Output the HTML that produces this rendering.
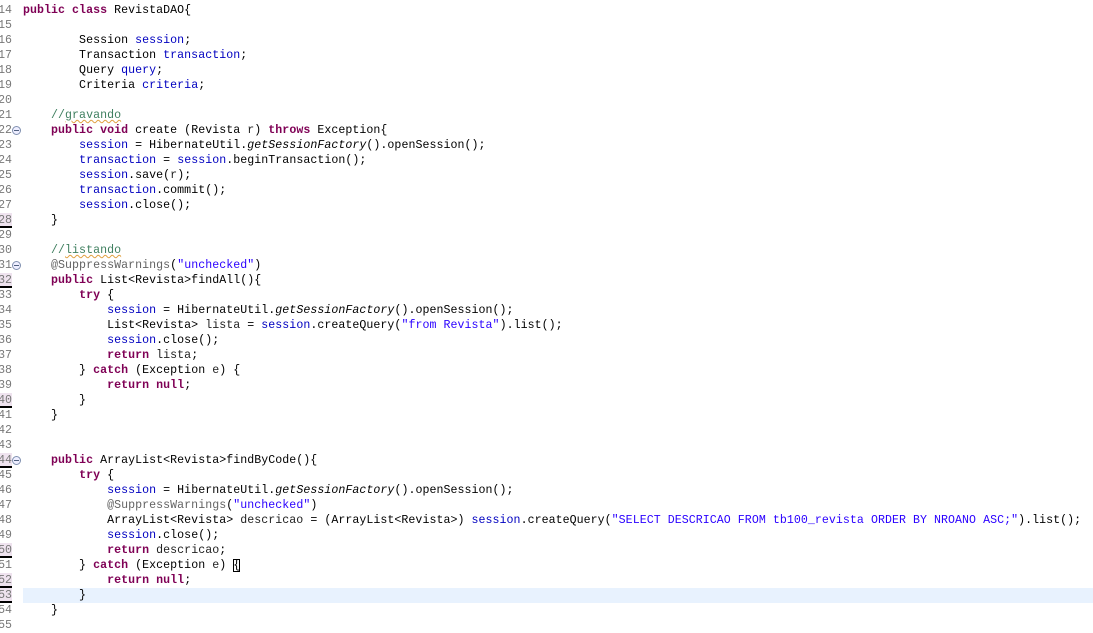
<!DOCTYPE html>
<html><head><meta charset="utf-8"><style>
body{margin:0;width:1093px;height:625px;overflow:hidden;background:#fff;font-family:"Liberation Mono","DejaVu Sans Mono",monospace;font-size:11.6px;letter-spacing:0.05px;}
.l{position:absolute;left:0;height:15px;line-height:15px;width:1093px;white-space:pre;margin-top:1px}
.n{position:absolute;left:-4px;width:16px;text-align:right;color:#787878;letter-spacing:0}
.m{background:#efe3ef;border-bottom:2px solid #000;height:13px;}
.c{position:absolute;left:23px;color:#000;}
.hl{background:#e8f2fe;}
.k{color:#7f0055;font-weight:bold}.f{color:#0000c0}.s{color:#2a00ff}.cm{color:#3f7f5f}.a{color:#646464}.i{font-style:italic}
.v{color:#222}
.u{text-decoration:underline wavy #e0a040;text-decoration-thickness:1px}
.fold{position:absolute;left:12px;top:3px;width:7px;height:7px;border:1px solid #8090b0;border-radius:50%;background:#eef;}
.fold:after{content:"";position:absolute;left:1px;top:3px;width:5px;height:1px;background:#506080}
</style></head><body>
<div class="l" style="top:2px"><span class="n">14</span><span class="c"><span class="k">public class</span> RevistaDAO{</span></div>
<div class="l" style="top:17px"><span class="n">15</span></div>
<div class="l" style="top:32px"><span class="n">16</span><span class="c">        Session <span class="f">session</span>;</span></div>
<div class="l" style="top:47px"><span class="n">17</span><span class="c">        Transaction <span class="f">transaction</span>;</span></div>
<div class="l" style="top:62px"><span class="n">18</span><span class="c">        Query <span class="f">query</span>;</span></div>
<div class="l" style="top:77px"><span class="n">19</span><span class="c">        Criteria <span class="f">criteria</span>;</span></div>
<div class="l" style="top:92px"><span class="n">20</span></div>
<div class="l" style="top:107px"><span class="n">21</span><span class="c">    <span class="cm">//<span class="u">gravando</span></span></span></div>
<div class="l" style="top:122px"><span class="n">22</span><span class="fold"></span><span class="c">    <span class="k">public void</span> create (Revista <span class="v">r</span>) <span class="k">throws</span> Exception{</span></div>
<div class="l" style="top:137px"><span class="n">23</span><span class="c">        <span class="f">session</span> = HibernateUtil.<span class="i">getSessionFactory</span>().openSession();</span></div>
<div class="l" style="top:152px"><span class="n">24</span><span class="c">        <span class="f">transaction</span> = <span class="f">session</span>.beginTransaction();</span></div>
<div class="l" style="top:167px"><span class="n">25</span><span class="c">        <span class="f">session</span>.save(<span class="v">r</span>);</span></div>
<div class="l" style="top:182px"><span class="n">26</span><span class="c">        <span class="f">transaction</span>.commit();</span></div>
<div class="l" style="top:197px"><span class="n">27</span><span class="c">        <span class="f">session</span>.close();</span></div>
<div class="l" style="top:212px"><span class="n m">28</span><span class="c">    }</span></div>
<div class="l" style="top:227px"><span class="n">29</span></div>
<div class="l" style="top:242px"><span class="n">30</span><span class="c">    <span class="cm">//<span class="u">listando</span></span></span></div>
<div class="l" style="top:257px"><span class="n">31</span><span class="fold"></span><span class="c">    <span class="a">@SuppressWarnings</span>(<span class="s">"unchecked"</span>)</span></div>
<div class="l" style="top:272px"><span class="n m">32</span><span class="c">    <span class="k">public</span> List&lt;Revista&gt;findAll(){</span></div>
<div class="l" style="top:287px"><span class="n">33</span><span class="c">        <span class="k">try</span> {</span></div>
<div class="l" style="top:302px"><span class="n">34</span><span class="c">            <span class="f">session</span> = HibernateUtil.<span class="i">getSessionFactory</span>().openSession();</span></div>
<div class="l" style="top:317px"><span class="n">35</span><span class="c">            List&lt;Revista&gt; <span class="v">lista</span> = <span class="f">session</span>.createQuery(<span class="s">"from Revista"</span>).list();</span></div>
<div class="l" style="top:332px"><span class="n">36</span><span class="c">            <span class="f">session</span>.close();</span></div>
<div class="l" style="top:347px"><span class="n">37</span><span class="c">            <span class="k">return</span> <span class="v">lista</span>;</span></div>
<div class="l" style="top:362px"><span class="n">38</span><span class="c">        } <span class="k">catch</span> (Exception <span class="v">e</span>) {</span></div>
<div class="l" style="top:377px"><span class="n">39</span><span class="c">            <span class="k">return null</span>;</span></div>
<div class="l" style="top:392px"><span class="n m">40</span><span class="c">        }</span></div>
<div class="l" style="top:407px"><span class="n">41</span><span class="c">    }</span></div>
<div class="l" style="top:422px"><span class="n">42</span></div>
<div class="l" style="top:437px"><span class="n">43</span></div>
<div class="l" style="top:452px"><span class="n m">44</span><span class="fold"></span><span class="c">    <span class="k">public</span> ArrayList&lt;Revista&gt;findByCode(){</span></div>
<div class="l" style="top:467px"><span class="n">45</span><span class="c">        <span class="k">try</span> {</span></div>
<div class="l" style="top:482px"><span class="n">46</span><span class="c">            <span class="f">session</span> = HibernateUtil.<span class="i">getSessionFactory</span>().openSession();</span></div>
<div class="l" style="top:497px"><span class="n">47</span><span class="c">            <span class="a">@SuppressWarnings</span>(<span class="s">"unchecked"</span>)</span></div>
<div class="l" style="top:512px"><span class="n">48</span><span class="c">            ArrayList&lt;Revista&gt; <span class="v">descricao</span> = (ArrayList&lt;Revista&gt;) <span class="f">session</span>.createQuery(<span class="s">"SELECT DESCRICAO FROM tb100_revista ORDER BY NROANO ASC;"</span>).list();</span></div>
<div class="l" style="top:527px"><span class="n">49</span><span class="c">            <span class="f">session</span>.close();</span></div>
<div class="l" style="top:542px"><span class="n m">50</span><span class="c">            <span class="k">return</span> <span class="v">descricao</span>;</span></div>
<div class="l" style="top:557px"><span class="n">51</span><span class="c">        } <span class="k">catch</span> (Exception <span class="v">e</span>) <span style="outline:1px solid #000;outline-offset:-1px">{</span></span></div>
<div class="l" style="top:572px"><span class="n m">52</span><span class="c">            <span class="k">return null</span>;</span></div>
<div class="l" style="top:587px"><span class="n m">53</span><span class="c hl" style="right:0">        }</span></div>
<div class="l" style="top:602px"><span class="n">54</span><span class="c">    }</span></div>
<div class="l" style="top:617px"><span class="n">55</span></div>
</body></html>
